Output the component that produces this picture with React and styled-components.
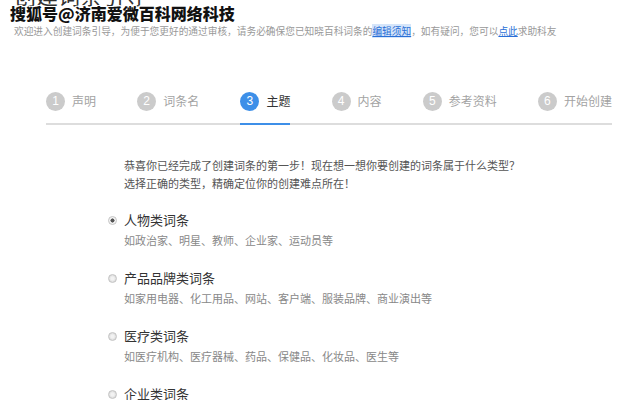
import React from 'react';
import styled, { createGlobalStyle } from 'styled-components';

const GlobalStyle = createGlobalStyle`
  body {
    margin: 0;
    background: #fff;
    font-family: 'Noto Sans CJK SC', 'Noto Sans', sans-serif;
  }
`;

const Page = styled.div`
  position: relative;
  width: 639px;
  height: 400px;
  overflow: hidden;
  background: #fff;
`;

const Header = styled.div`
  padding-left: 14px;
`;

const Title = styled.h1`
  margin: -17px 0 0;
  font-size: 22px;
  line-height: 22px;
  font-weight: normal;
  color: #333;
`;

const Subtitle = styled.p`
  margin: 19px 0 0;
  font-size: 9.7px;
  line-height: 14px;
  color: #999;
  white-space: nowrap;
`;

const Link = styled.a`
  color: #2a6fd6;
  text-decoration: underline;
  background: ${props => (props.highlight ? '#d5e5fa' : 'transparent')};
`;

const Watermark = styled.div`
  position: absolute;
  top: 3px;
  left: 10px;
  font-size: 16px;
  line-height: 20px;
  font-weight: 900;
  color: #111;
  text-shadow: 1px 0 0 #fff, -1px 0 0 #fff, 0 1px 0 #fff, 0 -1px 0 #fff,
    1px 1px 0 #fff, -1px -1px 0 #fff, 1px -1px 0 #fff, -1px 1px 0 #fff;
`;

const Steps = styled.div`
  display: flex;
  justify-content: space-between;
  margin: 53px 27px 0 46px;
  border-bottom: 2px solid #ddd;
`;

const Step = styled.div`
  display: flex;
  align-items: center;
  gap: 7px;
  padding-bottom: 12px;
  margin-bottom: -2px;
  border-bottom: 2px solid ${props => (props.active ? '#3d8fe8' : 'transparent')};
`;

const StepNum = styled.span`
  width: 19px;
  height: 19px;
  border-radius: 50%;
  background: ${props => (props.active ? '#3d8fe8' : '#cbcbcb')};
  color: #fff;
  font-family: 'Liberation Sans', Arial, sans-serif;
  font-size: 12px;
  line-height: 19px;
  text-align: center;
`;

const StepLabel = styled.span`
  font-size: 12px;
  line-height: 20px;
  color: ${props => (props.active ? '#333' : '#a3a3a3')};
`;

const Content = styled.div`
  margin-left: 108px;
`;

const Intro = styled.p`
  margin: 31px 0 0 16px;
  font-size: 11px;
  line-height: 18px;
  color: #555;
`;

const Options = styled.div`
  display: flex;
  flex-direction: column;
  gap: 19px;
  margin-top: 18px;
`;

const Option = styled.label`
  display: flex;
  gap: 7px;
`;

const Radio = styled.span`
  flex: none;
  box-sizing: border-box;
  width: 9px;
  height: 9px;
  margin-top: 6px;
  border-radius: 50%;
  border: 1px solid #c4c4c4;
  background: ${props =>
    props.checked
      ? 'radial-gradient(circle, #555 0 1.8px, #f4f4f4 2.3px)'
      : 'radial-gradient(circle, #f2f2f2 0 1.5px, #dcdcdc 3.5px)'};
`;

const OptionText = styled.div`
  display: flex;
  flex-direction: column;
  gap: 1px;
`;

const OptionTitle = styled.span`
  font-size: 13px;
  line-height: 20px;
  color: #333;
`;

const OptionDesc = styled.span`
  font-size: 11px;
  line-height: 18px;
  color: #888;
`;

const steps = ['声明', '词条名', '主题', '内容', '参考资料', '开始创建'];

const options = [
  { title: '人物类词条', desc: '如政治家、明星、教师、企业家、运动员等', checked: true },
  { title: '产品品牌类词条', desc: '如家用电器、化工用品、网站、客户端、服装品牌、商业演出等' },
  { title: '医疗类词条', desc: '如医疗机构、医疗器械、药品、保健品、化妆品、医生等' },
  { title: '企业类词条', desc: '如公司、工厂、商店、餐厅等' },
];

export default function App() {
  return (
    <Page>
      <GlobalStyle />
      <Header>
        <Title>创建词条引导</Title>
        <Subtitle>
          欢迎进入创建词条引导，为便于您更好的通过审核，请务必确保您已知晓百科词条的
          <Link highlight>编辑须知</Link>，如有疑问，您可以<Link>点此</Link>求助科友
        </Subtitle>
      </Header>
      <Watermark>搜狐号@济南爱微百科网络科技</Watermark>
      <Steps>
        {steps.map((label, i) => (
          <Step key={label} active={i === 2}>
            <StepNum active={i === 2}>{i + 1}</StepNum>
            <StepLabel active={i === 2}>{label}</StepLabel>
          </Step>
        ))}
      </Steps>
      <Content>
        <Intro>
          恭喜你已经完成了创建词条的第一步！现在想一想你要创建的词条属于什么类型？
          <br />
          选择正确的类型，精确定位你的创建难点所在！
        </Intro>
        <Options>
          {options.map(o => (
            <Option key={o.title}>
              <Radio checked={o.checked} />
              <OptionText>
                <OptionTitle>{o.title}</OptionTitle>
                <OptionDesc>{o.desc}</OptionDesc>
              </OptionText>
            </Option>
          ))}
        </Options>
      </Content>
    </Page>
  );
}
